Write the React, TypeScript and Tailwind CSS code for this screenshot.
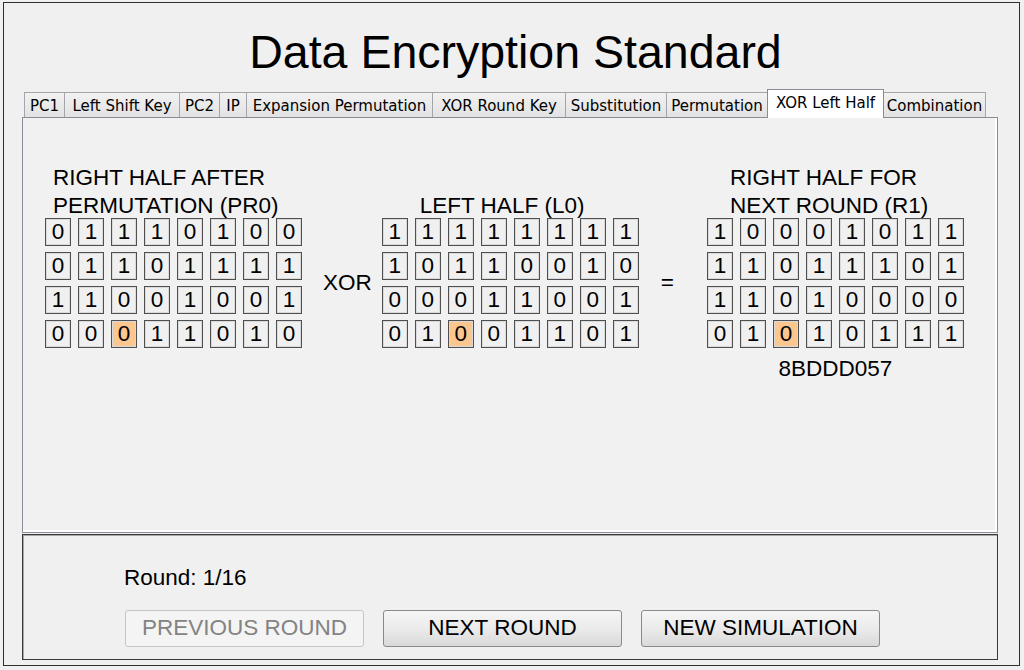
const PR0 = ["01110100", "01101111", "11001001", "00011010"];
const L0 = ["11111111", "10110010", "00011001", "01001101"];
const R1 = ["10001011", "11011101", "11010000", "01010111"];

const TABS = [
  { label: "PC1", w: "w-[41px]" },
  { label: "Left Shift Key", w: "w-[116px]" },
  { label: "PC2", w: "w-[41px]" },
  { label: "IP", w: "w-[28px]" },
  { label: "Expansion Permutation", w: "w-[187px]" },
  { label: "XOR Round Key", w: "w-[134px]" },
  { label: "Substitution", w: "w-[102px]" },
  { label: "Permutation", w: "w-[102px]" },
  { label: "XOR Left Half", w: "w-[117px]", active: true },
  { label: "Combination", w: "w-[103px]" },
];

function Cell({ v, hi }: { v: string; hi: boolean }) {
  return (
    <div
      className={`w-[26px] h-[28px] border border-[#4f4f4f] flex items-center justify-center leading-[26px] shadow-[inset_0_0_0_1px_#dadada] ${
        hi ? "bg-[#fcc68f]" : "bg-[#f0f0f0]"
      }`}
    >
      {v}
    </div>
  );
}

function BitGrid({ rows }: { rows: string[] }) {
  return (
    <div className="flex flex-col gap-[6px]">
      {rows.map((row, r) => (
        <div key={r} className="flex gap-[7px]">
          {row.split("").map((b, c) => (
            <Cell key={c} v={b} hi={r === 3 && c === 2} />
          ))}
        </div>
      ))}
    </div>
  );
}

function Button({ children, disabled }: { children: string; disabled?: boolean }) {
  return (
    <button
      disabled={disabled}
      className={`w-[239px] h-[37px] rounded-[3px] border flex items-center justify-center leading-none ${
        disabled
          ? "border-[#c6c6c6] bg-[#f4f4f4] text-[#838383]"
          : "border-[#8a8a8a] bg-gradient-to-b from-[#f5f5f5] via-[#ebebeb] to-[#d9d9d9] text-black"
      }`}
    >
      {children}
    </button>
  );
}

export default function App() {
  return (
    <div className="w-[1024px] h-[670px] bg-[#f0f0f0] pt-[2px] pl-[3px] font-['Liberation_Sans','Arial',sans-serif] text-black overflow-hidden">
      <div className="w-[1017px] h-[664px] border border-[#2e2e2e] bg-[#f0f0f0]">
        <div className="pt-[22px] pl-[8px] text-center text-[46.5px] leading-[54px]">
          Data Encryption Standard
        </div>

        <div className="ml-[18px] mt-[10px] w-[976px]">
          {/* tab strip */}
          <div className="flex items-end h-[28px] pl-[2px]">
            {TABS.map((t) =>
              t.active ? (
                <div
                  key={t.label}
                  className={`${t.w} -ml-px h-[29px] -mb-px relative z-10 bg-white border border-b-0 border-[#898c95] flex items-center justify-center pb-[2px] font-['DejaVu_Sans',sans-serif] text-[15px]`}
                >
                  {t.label}
                </div>
              ) : (
                <div
                  key={t.label}
                  className={`${t.w} -ml-px first:ml-0 h-[25px] pt-[2px] bg-gradient-to-b from-[#f2f2f2] to-[#e2e2e2] border border-b-0 border-[#a3a5ab] flex items-center justify-center font-['DejaVu_Sans',sans-serif] text-[15px] whitespace-nowrap`}
                >
                  {t.label}
                </div>
              )
            )}
          </div>

          {/* tab page */}
          <div className="h-[416px] border border-[#898c95] bg-[#f1f1f1] shadow-[inset_-2px_-2px_0_#ffffff] pt-[46px] pl-[22px] flex items-start text-[22.5px] leading-[28px]">
            <div className="flex flex-col">
              <div className="h-[54px] pl-[8px] whitespace-nowrap">
                RIGHT HALF AFTER
                <br />
                PERMUTATION (PR0)
              </div>
              <BitGrid rows={PR0} />
            </div>

            <div className="ml-[21px] mt-[105px]">XOR</div>

            <div className="flex flex-col ml-[10px]">
              <div className="h-[54px] pt-[28px] pl-[38px] whitespace-nowrap">LEFT HALF (L0)</div>
              <BitGrid rows={L0} />
            </div>

            <div className="ml-[22px] mt-[105px]">=</div>

            <div className="flex flex-col ml-[33px]">
              <div className="h-[54px] pl-[23px] whitespace-nowrap">
                RIGHT HALF FOR
                <br />
                NEXT ROUND (R1)
              </div>
              <BitGrid rows={R1} />
              <div className="mt-[7px] text-center">8BDDD057</div>
            </div>
          </div>

          {/* controls */}
          <div className="mt-[1px] h-[126px] border border-[#3a3a3a] shadow-[inset_1px_1px_0_#a8a8a8] pt-[29px] pl-[101px] text-[22.5px] leading-[28px]">
            <div>Round: 1/16</div>
            <div className="mt-[18px] ml-[1px] flex gap-[19px]">
              <Button disabled>PREVIOUS ROUND</Button>
              <Button>NEXT ROUND</Button>
              <Button>NEW SIMULATION</Button>
            </div>
          </div>
        </div>
      </div>
    </div>
  );
}
